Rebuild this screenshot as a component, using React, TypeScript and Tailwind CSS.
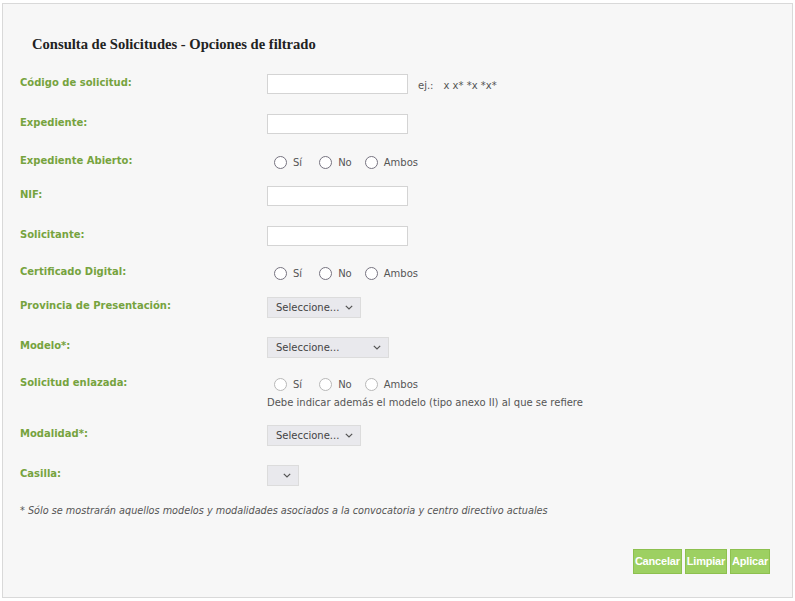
import * as React from "react";

const LABEL = "w-[247px] shrink-0 -mt-[3px] text-[10px] font-bold text-[#76a33e]";
const TXT = "text-[10px] text-[#555]";

function Chevron({ className = "" }: { className?: string }) {
  return (
    <svg width="8" height="5" viewBox="0 0 8 5" className={className}>
      <path d="M0.8 0.8 L4 4 L7.2 0.8" fill="none" stroke="#555" strokeWidth="1.2" />
    </svg>
  );
}

function TextInput() {
  return <div className="h-[20px] w-[141px] border border-[#d4d4d4] bg-white" />;
}

function Select({ width, label = "Seleccione..." }: { width: string; label?: string }) {
  return (
    <div className={`flex h-[21px] items-center justify-between border border-[#dcdcdc] bg-[#e9e9ed] pl-[8px] pr-[7px] ${width}`}>
      <span className="text-[10px] text-[#444]">{label}</span>
      <Chevron />
    </div>
  );
}

function Radios({ disabled = false }: { disabled?: boolean }) {
  const ring = disabled ? "border-[#b8b8b8]" : "border-[#767380]";
  const gaps = ["", "ml-[17px]", "ml-[13px]"];
  return (
    <div className="flex items-center pl-[7px]">
      {["Sí", "No", "Ambos"].map((o, i) => (
        <label key={o} className={`flex items-center ${gaps[i]}`}>
          <span className={`h-[13px] w-[13px] rounded-full border-[1.5px] bg-white ${ring}`} />
          <span className={`ml-[6px] ${TXT}`}>{o}</span>
        </label>
      ))}
    </div>
  );
}

function Row({ label, mt, children }: { label: string; mt: string; children: React.ReactNode }) {
  return (
    <div className={`flex h-[20px] items-center ${mt}`}>
      <span className={LABEL}>{label}</span>
      {children}
    </div>
  );
}

export default function App() {
  return (
    <div className="h-[601px] w-[795px] bg-white pl-[2px] pt-[3px]" style={{ fontFamily: '"DejaVu Sans", Verdana, sans-serif' }}>
      <div className="flex h-[595px] w-[791px] flex-col border border-[#d9d9d9] bg-[#f7f7f7] pl-[17px]">
        <h1
          className="ml-[12px] mt-[32px] text-[14.6px] font-bold leading-[16px] text-[#222]"
          style={{ fontFamily: '"Liberation Serif", Georgia, serif' }}
        >
          Consulta de Solicitudes - Opciones de filtrado
        </h1>

        <Row label="Código de solicitud:" mt="mt-[22px]">
          <TextInput />
          <span className={`ml-[10px] mt-[2px] ${TXT}`}>ej.:</span>
          <span className={`ml-[10px] mt-[2px] ${TXT}`}>x x* *x *x*</span>
        </Row>
        <Row label="Expediente:" mt="mt-[20px]">
          <TextInput />
        </Row>
        <Row label="Expediente Abierto:" mt="mt-[18px]">
          <Radios />
        </Row>
        <Row label="NIF:" mt="mt-[14px]">
          <TextInput />
        </Row>
        <Row label="Solicitante:" mt="mt-[20px]">
          <TextInput />
        </Row>
        <Row label="Certificado Digital:" mt="mt-[17px]">
          <Radios />
        </Row>
        <Row label="Provincia de Presentación:" mt="mt-[14px]">
          <Select width="w-[94px]" />
        </Row>
        <Row label="Modelo*:" mt="mt-[20px]">
          <Select width="w-[122px]" />
        </Row>
        <Row label="Solicitud enlazada:" mt="mt-[17px]">
          <Radios disabled />
        </Row>
        <div className={`ml-[247px] mt-[1px] ${TXT}`}>Debe indicar además el modelo (tipo anexo II) al que se refiere</div>
        <Row label="Modalidad*:" mt="mt-[15px]">
          <Select width="w-[94px]" />
        </Row>
        <Row label="Casilla:" mt="mt-[20px]">
          <Select width="w-[32px]" label="" />
        </Row>

        <p className="mt-[19px] text-[9.7px] italic text-[#555]">
          * Sólo se mostrarán aquellos modelos y modalidades asociados a la convocatoria y centro directivo actuales
        </p>

        <div className="mr-[22px] mt-[30px] flex justify-end gap-[3px]" style={{ fontFamily: '"Liberation Sans", Arial, sans-serif' }}>
          {["Cancelar", "Limpiar", "Aplicar"].map((b) => (
            <button
              key={b}
              className="h-[25px] border border-[#8dc04f] bg-[#9dd062] px-[1px] text-[11px] font-bold tracking-[-0.2px] text-white"
            >
              {b}
            </button>
          ))}
        </div>
      </div>
    </div>
  );
}
